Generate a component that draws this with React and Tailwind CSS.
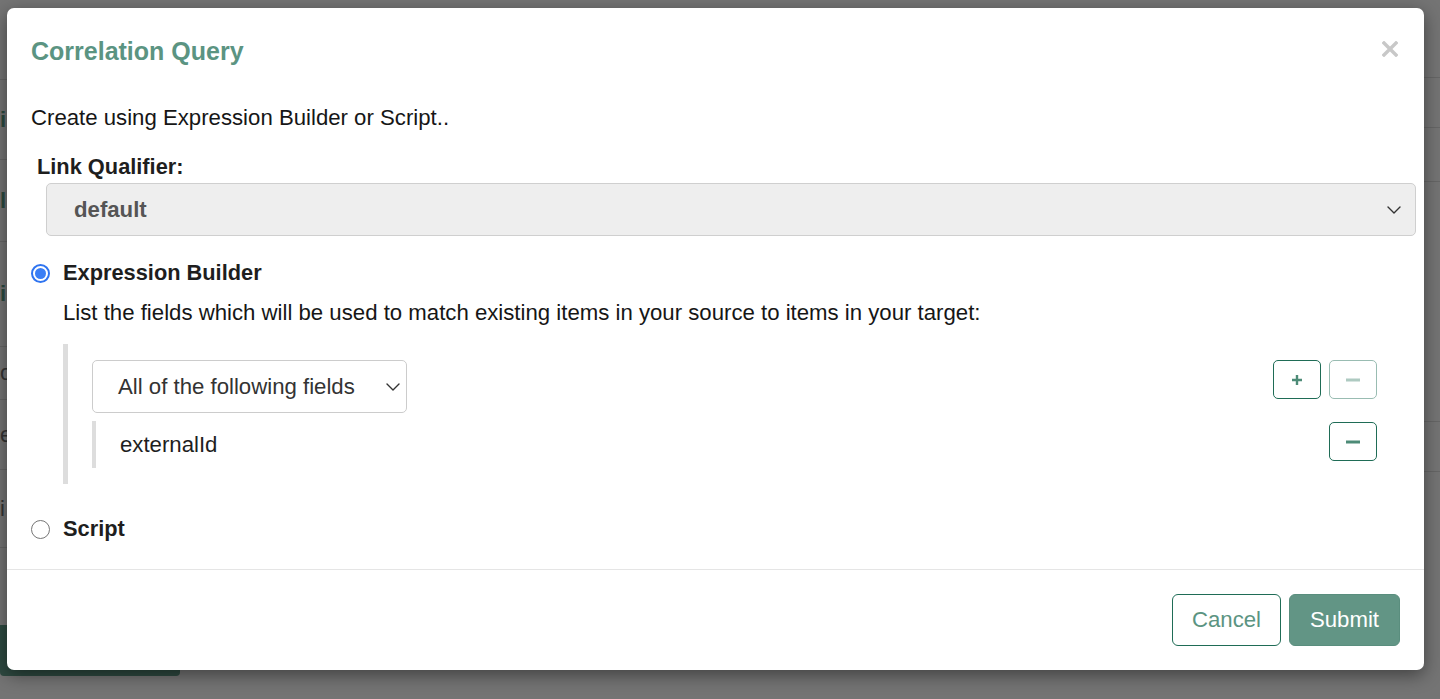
import React from "react";

const Chevron = ({ className = "" }) => (
  <svg width="14" height="8" viewBox="0 0 14 8" className={className} fill="none">
    <path d="M1 1l6 6 6-6" stroke="#333" strokeWidth="1.4" strokeLinecap="round" strokeLinejoin="round" />
  </svg>
);

const Radio = ({ checked }) =>
  checked ? (
    <span className="flex items-center justify-center w-[19px] h-[19px] rounded-full border-2 border-[#2f74f0] bg-white shrink-0">
      <span className="w-[11px] h-[11px] rounded-full bg-[#3a7ef5]" />
    </span>
  ) : (
    <span className="w-[19px] h-[19px] rounded-full border border-[#767676] bg-white shrink-0" />
  );

const IconButton = ({ kind, disabled }) => (
  <button
    type="button"
    className={
      "flex items-center justify-center w-[48px] h-[39px] rounded-[5px] border border-[#1f6c56] bg-white " +
      (disabled ? "opacity-45" : "")
    }
  >
    {kind === "plus" ? (
      <svg width="12" height="12" viewBox="0 0 12 12">
        <path d="M6 1v10M1 6h10" stroke="#4d8b77" strokeWidth="2.4" />
      </svg>
    ) : (
      <svg width="14" height="4" viewBox="0 0 14 4">
        <path d="M0 2h14" stroke="#4d8b77" strokeWidth="3" />
      </svg>
    )}
  </button>
);

const Background = () => (
  <div className="flex w-full h-[699px] bg-[#747474]">
    <div className="flex flex-col w-[40px] text-[#2b4a40] font-bold text-[22px] leading-none">
      <div className="h-[80px] border-b border-[#666]" />
      <div className="h-[80px] border-b border-[#666] flex items-center">i</div>
      <div className="h-[82px] border-b border-[#666] flex items-center">l</div>
      <div className="h-[105px] border-b border-[#666] flex items-center">i</div>
      <div className="h-[53px] border-b border-[#666] flex items-center font-normal text-[#333]">o</div>
      <div className="h-[70px] border-b border-[#666] flex items-center font-normal text-[#333]">e</div>
      <div className="h-[78px] border-b border-[#666] flex items-center font-normal text-[#333]">i</div>
      <div className="h-[77px]" />
      <div className="w-[180px] h-[51px] rounded-b-[4px] bg-[#2e4a41]" />
    </div>
    <div className="ml-auto flex flex-col w-[30px]">
      <div className="h-[78px] border-b border-[#666]" />
      <div className="h-[50px] border-b border-[#666]" />
      <div className="h-[54px] border-b border-[#666]" />
      <div className="h-[240px] border-b border-[#666]" />
      <div className="h-[50px] border-b border-[#666]" />
    </div>
  </div>
);

export default function App() {
  return (
    <div
      className="relative w-[1440px] h-[699px] overflow-hidden"
      style={{ fontFamily: '"Liberation Sans", Arial, Helvetica, sans-serif' }}
    >
      <Background />
      <div className="absolute left-[7px] top-[8px] w-[1417px] h-[662px] bg-white rounded-[7px] shadow-[0_5px_18px_rgba(0,0,0,0.45)] flex flex-col text-[22.2px] leading-[30px] text-[#161616]">
        <div className="flex items-start justify-between pl-[24px] pr-[26px] pt-[28px]">
          <h4 className="text-[25px] leading-[30px] font-bold text-[#5b9482]">Correlation Query</h4>
          <button type="button" className="mt-[5px]" aria-label="Close">
            <svg width="16" height="16" viewBox="0 0 16 16">
              <path d="M2 2l12 12M14 2L2 14" stroke="#c8c8c8" strokeWidth="3.4" strokeLinecap="square" />
            </svg>
          </button>
        </div>

        <div className="flex flex-col pl-[24px] pr-[8px]">
          <p className="mt-[37px]">Create using Expression Builder or Script..</p>

          <label className="mt-[19px] ml-[6px] font-bold text-[21.8px] text-[#1e1e1e]">Link Qualifier:</label>
          <div className="mt-[1px] ml-[15px] h-[53px] flex items-center justify-between pl-[27px] pr-[14px] bg-[#eeeeee] border border-[#cfcfcf] rounded-[5px]">
            <span className="font-bold text-[#555]">default</span>
            <Chevron />
          </div>

          <div className="mt-[22px] flex items-center gap-[13px]">
            <Radio checked />
            <span className="font-bold text-[21.8px] text-[#1e1e1e]">Expression Builder</span>
          </div>

          <div className="ml-[32px] mr-[39px] flex flex-col">
            <p className="mt-[10px]">List the fields which will be used to match existing items in your source to items in your target:</p>

            <div className="mt-[16px] h-[140px] border-l-[5px] border-[#dddddd] pl-[24px] pt-[16px] flex flex-col">
              <div className="flex items-start justify-between">
                <div className="w-[315px] h-[53px] flex items-center justify-between pl-[25px] pr-[6px] border border-[#cccccc] rounded-[5px] bg-white text-[#333]">
                  <span>All of the following fields</span>
                  <Chevron />
                </div>
                <div className="flex gap-[8px]">
                  <IconButton kind="plus" />
                  <IconButton kind="minus" disabled />
                </div>
              </div>
              <div className="mt-[8px] flex items-start justify-between">
                <div className="h-[47px] border-l-4 border-[#dddddd] pl-[24px] flex items-center text-[#1e1e1e]">externalId</div>
                <div className="mt-[1px]">
                  <IconButton kind="minus" />
                </div>
              </div>
            </div>
          </div>

          <div className="mt-[30px] flex items-center gap-[13px]">
            <Radio />
            <span className="font-bold text-[21.8px] text-[#1e1e1e]">Script</span>
          </div>
        </div>

        <div className="mt-[25px] border-t border-[#e5e5e5] flex justify-end gap-[8px] pt-[24px] pr-[24px]">
          <button type="button" className="w-[109px] h-[52px] rounded-[6px] border border-[#1f6c56] bg-white text-[#5b9482]">
            Cancel
          </button>
          <button type="button" className="w-[111px] h-[52px] rounded-[6px] border border-[#5a8e7e] bg-[#629585] text-white">
            Submit
          </button>
        </div>
      </div>
    </div>
  );
}
